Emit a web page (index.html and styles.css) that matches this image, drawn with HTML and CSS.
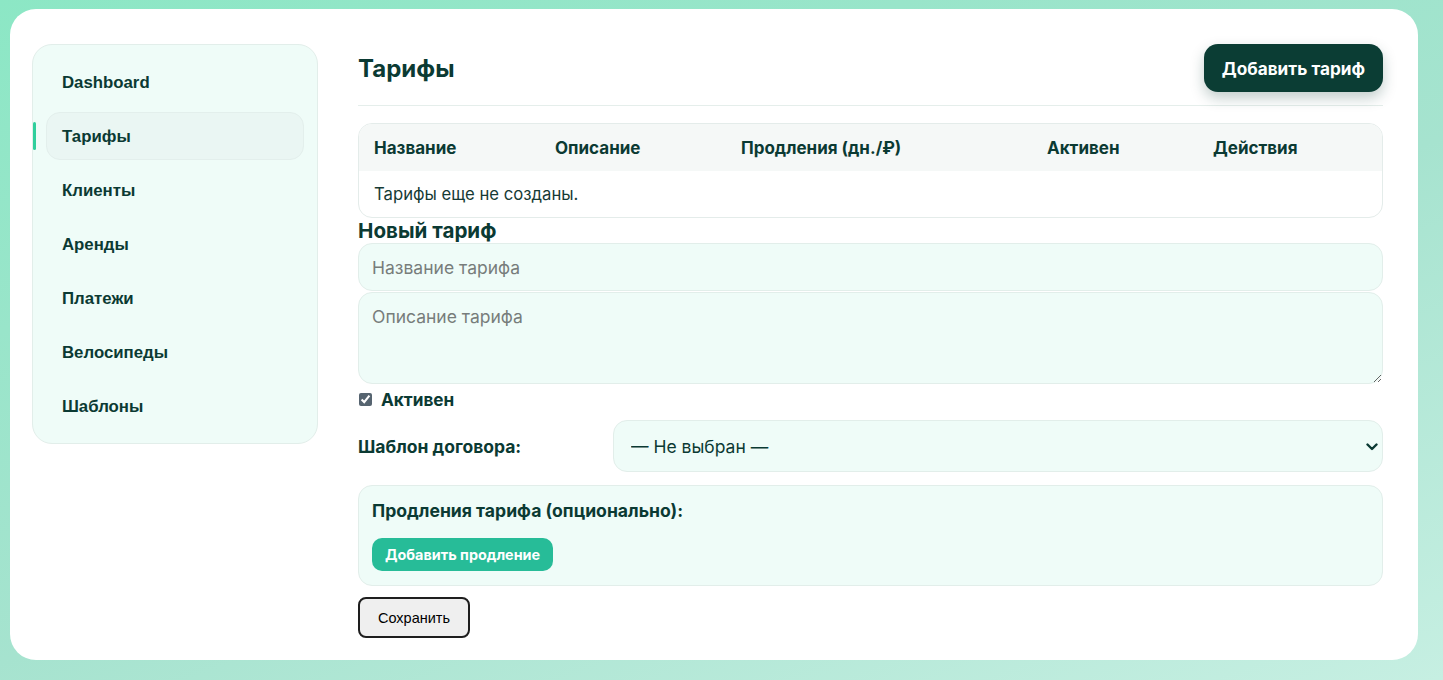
FILE: index.html
```html
<!DOCTYPE html>
<html lang="ru">
<head>
<meta charset="utf-8">
<title>Тарифы</title>
<link rel="stylesheet" href="styles.css">
</head>
<body>
<div class="card">
  <aside class="sidebar">
    <a class="nav-item">Dashboard</a>
    <a class="nav-item active">Тарифы</a>
    <a class="nav-item">Клиенты</a>
    <a class="nav-item">Аренды</a>
    <a class="nav-item">Платежи</a>
    <a class="nav-item">Велосипеды</a>
    <a class="nav-item">Шаблоны</a>
  </aside>
  <main class="main">
    <header class="page-header">
      <h1 class="title">Тарифы</h1>
      <button class="btn-primary">Добавить тариф</button>
    </header>
    <div class="table-wrap">
      <table class="table">
        <colgroup>
          <col class="c1"><col class="c2"><col class="c3"><col class="c4"><col class="c5">
        </colgroup>
        <thead>
          <tr><th>Название</th><th>Описание</th><th>Продления (дн./₽)</th><th>Активен</th><th>Действия</th></tr>
        </thead>
        <tbody>
          <tr><td colspan="5">Тарифы еще не созданы.</td></tr>
        </tbody>
      </table>
    </div>
    <h3 class="form-title">Новый тариф</h3>
    <input class="field" type="text" placeholder="Название тарифа">
    <textarea class="field area" placeholder="Описание тарифа"></textarea>
    <label class="check-row"><input type="checkbox" checked class="check"><span>Активен</span></label>
    <div class="select-row">
      <span class="select-label">Шаблон договора:</span>
      <div class="select-wrap">
        <select class="select"><option>— Не выбран —</option></select>
        <svg class="chevron" width="12" height="8" viewBox="0 0 12 8"><path d="M1.5 1.5 L6 6 L10.5 1.5" fill="none" stroke="#0b3a33" stroke-width="2.4" stroke-linecap="round" stroke-linejoin="round"/></svg>
      </div>
    </div>
    <div class="ext-box">
      <div class="ext-title">Продления тарифа (опционально):</div>
      <button class="btn-add">Добавить продление</button>
    </div>
    <button class="btn-save">Сохранить</button>
  </main>
</div>
</body>
</html>
```
FILE: styles.css
```css
* { box-sizing: border-box; }
html, body { height: 100%; }
body {
  margin: 0;
  background: linear-gradient(160deg, #8ce7c5 0%, #a6e3cf 55%, #c6efe2 100%);
  font-family: Inter, "Noto Sans", sans-serif;
  color: #0b3a33;
  overflow: hidden;
}
.card {
  margin: 9px 0 0 10px;
  width: 1408px;
  height: 651px;
  background: #fff;
  border-radius: 26px;
  display: flex;
  gap: 40px;
  padding: 35px 35px 22px 22px;
  align-items: flex-start;
}
.sidebar {
  width: 286px;
  flex: none;
  background: #effcf8;
  border: 1px solid #e2eeea;
  border-radius: 20px;
  padding: 13px 13px 13px;
  display: flex;
  flex-direction: column;
  gap: 6px;
}
.nav-item {
  position: relative;
  height: 48px;
  display: flex;
  align-items: center;
  padding-left: 15px;
  padding-top: 1px;
  font-family: "Liberation Sans", Arial, sans-serif;
  font-weight: 700;
  font-size: 16.8px;
  color: #0b3a33;
  border-radius: 14px;
  border: 1px solid transparent;
}
.nav-item.active {
  background: #eaf6f3;
  border-color: #e3efec;
}
.nav-item.active::before {
  content: "";
  position: absolute;
  left: -14px;
  top: 9px;
  bottom: 9px;
  width: 3px;
  border-radius: 2px;
  background: #2fcf9c;
}
.main {
  flex: 1;
  min-width: 0;
  display: flex;
  flex-direction: column;
}
.page-header {
  display: flex;
  justify-content: space-between;
  align-items: center;
  padding-bottom: 13px;
  border-bottom: 1px solid #e5eeeb;
}
.title {
  margin: 0;
  font-size: 24px;
  font-weight: 700;
  color: #0b3a33;
}
.btn-primary {
  height: 48px;
  padding: 0 18px;
  border: none;
  border-radius: 14px;
  background: #0b3d34;
  color: #fff;
  font-family: Inter, sans-serif;
  font-weight: 700;
  font-size: 17.2px;
  box-shadow: 0 6px 14px rgba(11, 61, 52, 0.25);
}
.table-wrap {
  margin-top: 17px;
  border: 1px solid #e4ecea;
  border-radius: 14px;
  overflow: hidden;
}
.table {
  width: 100%;
  border-collapse: collapse;
  table-layout: fixed;
}
.c1 { width: 181px; }
.c2 { width: 186px; }
.c3 { width: 306px; }
.c4 { width: 166px; }
.c5 { width: auto; }
.table th {
  background: #f5f8f7;
  text-align: left;
  font-weight: 700;
  font-size: 17px;
  height: 47px;
  padding: 0 15px;
  color: #0b3a33;
}
.table td {
  height: 46px;
  padding: 0 15px;
  font-size: 16.7px;
  color: #163a35;
}
.form-title {
  margin: 0;
  font-size: 20.6px;
  font-weight: 700;
  line-height: 25px;
}
.field {
  display: block;
  width: 100%;
  height: 48px;
  border: 1px solid #e2eeea;
  border-radius: 14px;
  background: #effcf8;
  padding: 0 13px;
  font-family: Inter, sans-serif;
  font-size: 17.5px;
  color: #0b3a33;
  outline: none;
}
.field::placeholder { color: #777d7b; }
.area {
  margin-top: 1px;
  height: 92px;
  padding: 13px 13px;
  resize: vertical;
}
.check-row {
  display: flex;
  align-items: center;
  gap: 9px;
  margin-top: 6px;
  height: 18px;
  font-weight: 700;
  font-size: 17.2px;
}
.check {
  margin: 0 0 0 1px;
  width: 13px;
  height: 13px;
  accent-color: #566470;
}
.select-row {
  display: flex;
  align-items: center;
  margin-top: 12px;
}
.select-label {
  width: 255px;
  flex: none;
  font-weight: 700;
  font-size: 17.5px;
}
.select-wrap {
  position: relative;
  flex: 1;
}
.select {
  display: block;
  width: 100%;
  height: 52px;
  appearance: none;
  -webkit-appearance: none;
  border: 1px solid #e2eeea;
  border-radius: 14px;
  background: #effcf8;
  padding: 0 17px;
  font-family: Inter, sans-serif;
  font-size: 17.5px;
  color: #0b3a33;
}
.chevron {
  position: absolute;
  right: 5px;
  top: 23px;
  pointer-events: none;
}
.ext-box {
  margin-top: 13px;
  background: #effcf8;
  border: 1px solid #e2eeea;
  border-radius: 14px;
  padding: 13px 13px 14px;
  display: flex;
  flex-direction: column;
  align-items: flex-start;
}
.ext-title {
  font-weight: 700;
  font-size: 17.6px;
  line-height: 24px;
}
.btn-add {
  margin-top: 15px;
  height: 33px;
  padding: 0 13px;
  border: none;
  border-radius: 10px;
  background: #27bc98;
  color: #fff;
  font-family: Inter, sans-serif;
  font-weight: 700;
  font-size: 14.4px;
}
.btn-save {
  margin-top: 11px;
  align-self: flex-start;
  height: 41px;
  padding: 0 18px;
  background: #efefef;
  border: 2px solid #1e1e1e;
  border-radius: 8px;
  font-family: "Liberation Sans", Arial, sans-serif;
  font-size: 14.5px;
  color: #000;
}
```
